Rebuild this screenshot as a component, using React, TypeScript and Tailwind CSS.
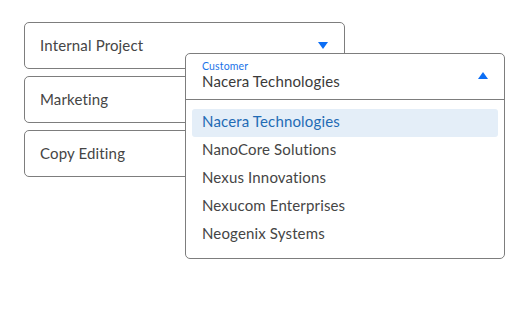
import React from "react";

const Tri = ({ up }: { up?: boolean }) => (
  <svg width="10" height="7" viewBox="0 0 10 7" className="block">
    {up ? <path d="M0 7 L5 0 L10 7 Z" fill="#0b6ef5" /> : <path d="M0 0 L10 0 L5 7 Z" fill="#0b6ef5" />}
  </svg>
);

export default function App() {
  const items = ["Nacera Technologies", "NanoCore Solutions", "Nexus Innovations", "Nexucom Enterprises", "Neogenix Systems"];
  return (
    <div className="relative w-[526px] h-[323px] bg-white tracking-[0.15px]" style={{ fontFamily: "Lato, 'Noto Sans', sans-serif" }}>
      <div className="pt-[22px] pl-[24px] flex flex-col gap-[7px] w-[345px]">
        <div className="h-[47px] border border-[#7d7d7d] rounded-[5px] flex items-center justify-between pl-[15px] pr-[16px] text-[15px] text-[#454545]">
          <span>Internal Project</span>
          <Tri />
        </div>
        <div className="h-[47px] border border-[#7d7d7d] rounded-[5px] flex items-center pl-[15px] text-[15px] text-[#454545]">
          <span>Marketing</span>
        </div>
        <div className="h-[47px] border border-[#7d7d7d] rounded-[5px] flex items-center pl-[15px] text-[15px] text-[#454545]">
          <span>Copy Editing</span>
        </div>
      </div>
      <div className="absolute left-[185px] top-[53px] w-[320px] h-[206px] border border-[#7d7d7d] rounded-[5px] bg-white flex flex-col">
        <div className="h-[46px] border-b border-[#7d7d7d] flex items-start justify-between pl-[16px] pr-[16px]">
          <div className="flex flex-col pt-[6px]">
            <span className="text-[10.5px] leading-[12px] text-[#1a73e8]">Customer</span>
            <span className="text-[15px] leading-[18px] text-[#3a3a3a]">Nacera Technologies</span>
          </div>
          <div className="pt-[18px]">
            <Tri up />
          </div>
        </div>
        <div className="px-[6px] pt-[9px] flex flex-col">
          {items.map((it, i) => (
            <div
              key={it}
              className={
                i === 0
                  ? "h-[28px] rounded-[3px] bg-[#e4eef8] text-[#1f6bb5] flex items-center pl-[10px] pb-[3px] text-[15px]"
                  : "h-[28px] flex items-center pl-[10px] pb-[3px] text-[15px] text-[#454545]"
              }
            >
              {it}
            </div>
          ))}
        </div>
      </div>
    </div>
  );
}
